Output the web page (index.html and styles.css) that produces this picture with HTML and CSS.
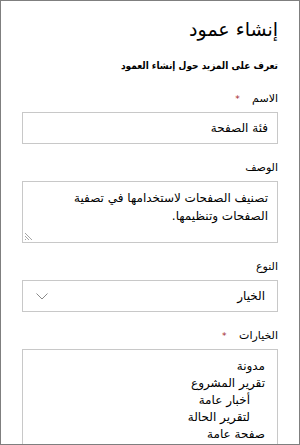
FILE: index.html
```html
<!DOCTYPE html>
<html lang="ar" dir="rtl">
<head>
  <meta charset="UTF-8">
  <meta name="viewport" content="width=device-width, initial-scale=1.0">
  <title>إنشاء عمود</title>
  <link rel="stylesheet" href="styles.css">
</head>
<body>
  <div class="painel">
    <h1 class="titulo">إنشاء عمود</h1>
    <a class="saiba-mais" href="#">تعرف على المزيد حول إنشاء العمود</a>

    <div class="campo">
      <div class="rotulo">الاسم <span class="obrigatorio">*</span></div>
      <div class="caixa entrada">فئة الصفحة</div>
    </div>

    <div class="campo">
      <div class="rotulo">الوصف</div>
      <div class="caixa area">
        تصنيف الصفحات لاستخدامها في تصفية الصفحات وتنظيمها.
        <svg class="redimensionar" width="10" height="10" viewBox="0 0 10 10">
          <path d="M1 2 L8 9 M1 5 L5 9 M1 8 L2 9" stroke="#a6a6a6" stroke-width="1" fill="none"/>
        </svg>
      </div>
    </div>

    <div class="campo">
      <div class="rotulo">النوع</div>
      <div class="caixa selecao">
        <span>الخيار</span>
        <svg width="12" height="7" viewBox="0 0 12 7">
          <path d="M0.5 0.5 L6 6 L11.5 0.5" stroke="#8a8a8a" stroke-width="1" fill="none"/>
        </svg>
      </div>
    </div>

    <div class="campo">
      <div class="rotulo">الخيارات <span class="obrigatorio">*</span></div>
      <div class="caixa lista">
        <div>مدونة</div>
        <div>تقرير المشروع</div>
        <div class="recuo">أخبار عامة</div>
        <div class="recuo">لتقرير الحالة</div>
        <div>صفحة عامة</div>
      </div>
    </div>
  </div>
</body>
</html>
```

FILE: styles.css
```css
:root {
  --borda: #c8c8c8;
  --moldura: #7f7f7f;
  --texto: #000;
  --vermelho: #a4262c;
}

* {
  box-sizing: border-box;
}

body {
  margin: 0;
  font-family: "DejaVu Sans", sans-serif;
  color: var(--texto);
}

.painel {
  width: 300px;
  height: 445px;
  border: 1px solid var(--moldura);
  padding: 14px 21px 0 21px;
  overflow: hidden;
}

.titulo {
  margin: 0;
  font-size: 19px;
  font-weight: normal;
  line-height: 28px;
}

.saiba-mais {
  display: block;
  margin-top: 14px;
  font-size: 10px;
  font-weight: bold;
  font-stretch: condensed;
  line-height: 18px;
  color: var(--texto);
  text-decoration: none;
}

.campo {
  margin-top: 15px;
}

.rotulo {
  font-size: 11px;
  line-height: 18px;
  margin-bottom: 4px;
}

.obrigatorio {
  color: var(--vermelho);
  font-size: 9px;
  margin-right: 9px;
  vertical-align: top;
}

.caixa {
  border: 1px solid var(--borda);
  font-size: 12px;
  padding: 0 9px 0 10px;
  position: relative;
}

.entrada {
  height: 32px;
  line-height: 30px;
}

.area {
  height: 62px;
  line-height: 18px;
  padding-top: 7px;
}

.redimensionar {
  position: absolute;
  left: 1px;
  bottom: 1px;
}

.selecao {
  height: 32px;
  display: flex;
  justify-content: space-between;
  align-items: center;
  padding: 0 12px 0 13px;
}

.lista {
  height: 120px;
  line-height: 17px;
  padding: 8px 12px 0 10px;
}

.lista .recuo {
  padding-right: 15px;
}
```
